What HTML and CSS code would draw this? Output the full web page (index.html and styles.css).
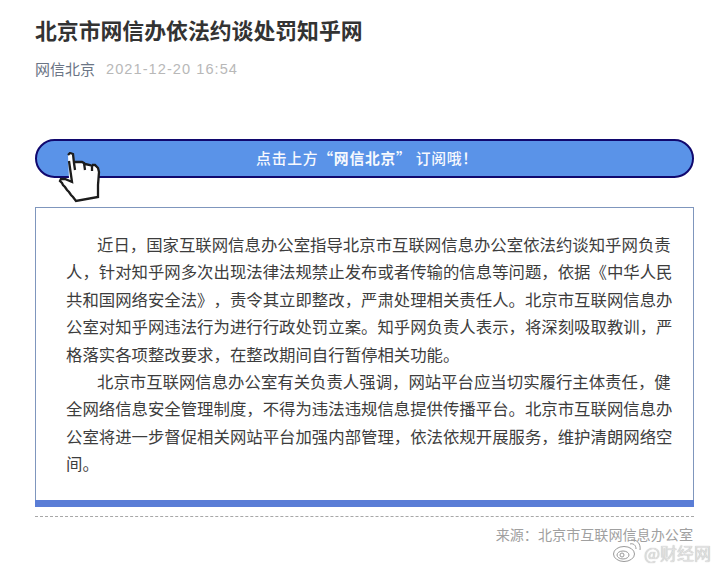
FILE: index.html
```html
<!DOCTYPE html>
<html lang="zh-CN">
<head>
<meta charset="utf-8">
<title>北京市网信办依法约谈处罚知乎网</title>
<link rel="stylesheet" href="styles.css">
</head>
<body>
<main class="page">
  <h1 class="title">北京市网信办依法约谈处罚知乎网</h1>
  <div class="meta"><span class="author">网信北京</span><span class="date">2021-12-20 16:54</span></div>
  <div class="banner">
    <span class="banner-text">点击上方<b>“网信北京”</b> 订阅哦！</span>
    <svg class="hand" viewBox="57 152 46 52" width="46" height="52" aria-hidden="true">
      <path class="hand-fill" d="M68 155l2-2 3 1 1 9 8 0 1 1 6 1 1 1 5 0 3 3 1 4-1 24-22 5-13-18-3-5 1-1 8 1z"/>
      <path class="hand-line" d="M68 155l2-2 3 1 1 9 1 7M75 162l7 0 2 1 1 7M85 164l5 1 2 1 0 5M92 165l3 0 3 3 1 4-1 13 0 12-22 4-3-4-2-2-2-3-2-2-2-3-2-2-1-2-2-2 1-2 4 0 7 3-3-21"/>
    </svg>
  </div>
  <section class="box">
    <div class="box-body">
      <p>近日，国家互联网信息办公室指导北京市互联网信息办公室依法约谈知乎网负责人，针对知乎网多次出现法律法规禁止发布或者传输的信息等问题，依据《中华人民共和国网络安全法》，责令其立即整改，严肃处理相关责任人。北京市互联网信息办公室对知乎网违法行为进行行政处罚立案。知乎网负责人表示，将深刻吸取教训，严格落实各项整改要求，在整改期间自行暂停相关功能。</p>
      <p>北京市互联网信息办公室有关负责人强调，网站平台应当切实履行主体责任，健全网络信息安全管理制度，不得为违法违规信息提供传播平台。北京市互联网信息办公室将进一步督促相关网站平台加强内部管理，依法依规开展服务，维护清朗网络空间。</p>
    </div>
    <div class="box-bar"></div>
  </section>
  <div class="source">来源：北京市互联网信息办公室</div>
</main>
<div class="watermark">
  <svg class="weibo" viewBox="0 0 30 24" width="30" height="24" aria-hidden="true">
    <ellipse cx="12" cy="15" rx="10.5" ry="7.5"/>
    <ellipse cx="11" cy="16" rx="6" ry="4"/>
    <circle cx="10" cy="16" r="2"/>
    <path d="M18 5c3-1 6 1 6 5M19 1c6-1 10 4 9 10"/>
  </svg>
  <span>@财经网</span>
</div>
</body>
</html>
```
FILE: styles.css
```css
html, body { margin: 0; padding: 0; background: #fff; }
body {
  position: relative;
  width: 720px;
  height: 568px;
  overflow: hidden;
  font-family: "Noto Sans CJK SC", "Liberation Sans", sans-serif;
  text-spacing-trim: space-all;
}
.page { padding: 15px 26px 0 35px; }
.title {
  margin: 0;
  font-size: 21.85px;
  line-height: 30px;
  font-weight: 700;
  color: #333;
}
.meta {
  display: flex;
  gap: 11px;
  margin-top: 13px;
  height: 22px;
  line-height: 22px;
  font-size: 15px;
}
.author { color: #6b7585; }
.date { color: #b8b8b8; font-family: "Liberation Sans", sans-serif; font-size: 14.6px; letter-spacing: 1.05px; }
.banner {
  position: relative;
  box-sizing: border-box;
  height: 39px;
  margin-top: 59px;
  padding-left: 5px;
  display: flex;
  align-items: center;
  justify-content: center;
  border: 2px solid #10086e;
  border-radius: 20px;
  background: #5a93e8;
  color: #f7f9fe;
  font-size: 14.8px;
  font-weight: 500;
  letter-spacing: 0.75px;
}
.banner-text { margin-top: -3px; }
.banner b { font-weight: 700; }
.hand { position: absolute; left: 20px; top: 11px; }
.hand-fill { fill: #fff; }
.hand-line { fill: none; stroke: #1c1c1c; stroke-width: 2.3; stroke-linejoin: miter; }
.box {
  box-sizing: border-box;
  height: 300px;
  margin-top: 29px;
  border: 1px solid #7f96bd;
  border-bottom: 0;
  display: flex;
  flex-direction: column;
}
.box-body {
  flex: 1;
  padding: 23px 18px 0 30px;
  font-size: 16.4px;
  line-height: 27.4px;
  color: #3d3d3d;
}
.box-body p { margin: 0; text-indent: 31px; }
.box-bar { height: 7px; background: #5a7dd6; margin: 0 -1px; }
.source {
  margin-top: 9px;
  padding-top: 8px;
  border-top: 1px dashed #a8a8a8;
  text-align: right;
  font-size: 14.1px;
  line-height: 18px;
  color: #a0a0a0;
  padding-right: 1px;
}
.watermark {
  position: absolute;
  left: 612px;
  top: 544px;
  height: 18px;
  display: flex;
  align-items: flex-start;
  gap: 2px;
  font-size: 17px;
  line-height: 18px;
  color: #e0e0e0;
  text-shadow: 0 0 1px #aaa;
}
.weibo { fill: none; stroke: #9a9a9a; stroke-width: 1; margin-top: -5px; }
```
